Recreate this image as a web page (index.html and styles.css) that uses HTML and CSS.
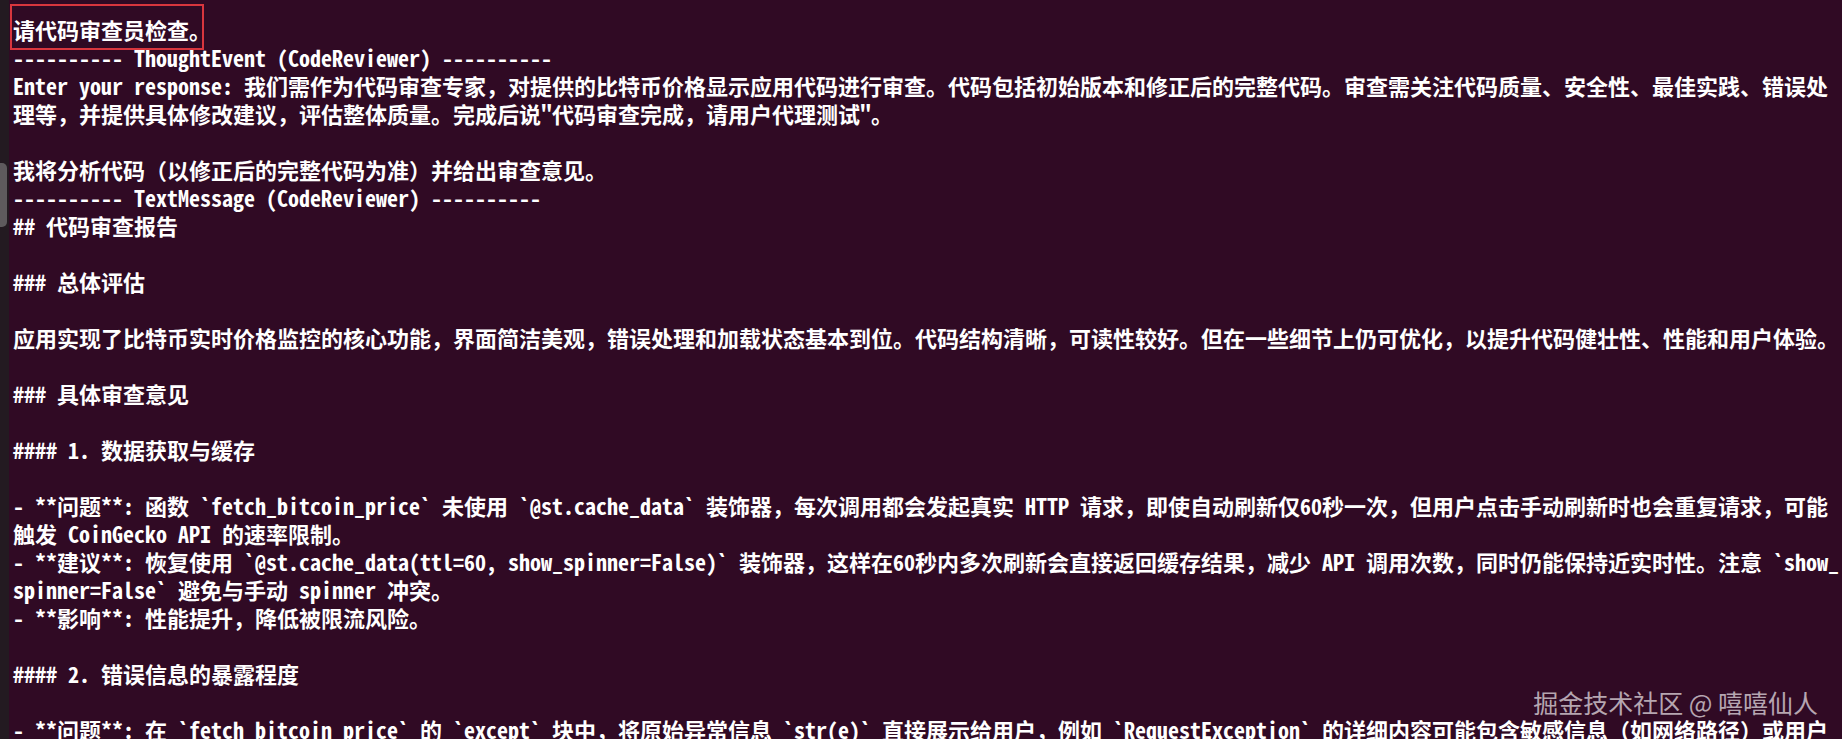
FILE: index.html
```html
<!DOCTYPE html>
<html lang="zh-CN">
<head>
<meta charset="utf-8">
<title>Terminal</title>
<link rel="stylesheet" href="styles.css">
</head>
<body>
<div class="screen">
  <div class="edge"><div class="edge-thumb"></div></div>
  <div class="term">
    <div class="ln"><span class="mark">请代码审查员检查。</span></div>
    <div class="ln">---------- ThoughtEvent (CodeReviewer) ----------</div>
    <div class="ln">Enter your response: 我们需作为代码审查专家，对提供的比特币价格显示应用代码进行审查。代码包括初始版本和修正后的完整代码。审查需关注代码质量、安全性、最佳实践、错误处</div>
    <div class="ln">理等，并提供具体修改建议，评估整体质量。完成后说"代码审查完成，请用户代理测试"。</div>
    <div class="ln"></div>
    <div class="ln">我将分析代码（以修正后的完整代码为准）并给出审查意见。</div>
    <div class="ln">---------- TextMessage (CodeReviewer) ----------</div>
    <div class="ln">## 代码审查报告</div>
    <div class="ln"></div>
    <div class="ln">### 总体评估</div>
    <div class="ln"></div>
    <div class="ln">应用实现了比特币实时价格监控的核心功能，界面简洁美观，错误处理和加载状态基本到位。代码结构清晰，可读性较好。但在一些细节上仍可优化，以提升代码健壮性、性能和用户体验。</div>
    <div class="ln"></div>
    <div class="ln">### 具体审查意见</div>
    <div class="ln"></div>
    <div class="ln">#### 1. 数据获取与缓存</div>
    <div class="ln"></div>
    <div class="ln">- **问题**: 函数 `fetch_bitcoin_price` 未使用 `@st.cache_data` 装饰器，每次调用都会发起真实 HTTP 请求，即使自动刷新仅60秒一次，但用户点击手动刷新时也会重复请求，可能</div>
    <div class="ln">触发 CoinGecko API 的速率限制。</div>
    <div class="ln">- **建议**: 恢复使用 `@st.cache_data(ttl=60, show_spinner=False)` 装饰器，这样在60秒内多次刷新会直接返回缓存结果，减少 API 调用次数，同时仍能保持近实时性。注意 `show_</div>
    <div class="ln">spinner=False` 避免与手动 spinner 冲突。</div>
    <div class="ln">- **影响**: 性能提升，降低被限流风险。</div>
    <div class="ln"></div>
    <div class="ln">#### 2. 错误信息的暴露程度</div>
    <div class="ln"></div>
    <div class="ln">- **问题**: 在 `fetch_bitcoin_price` 的 `except` 块中，将原始异常信息 `str(e)` 直接展示给用户，例如 `RequestException` 的详细内容可能包含敏感信息（如网络路径）或用户</div>
  </div>
  <div class="watermark">掘金技术社区 @ 嘻嘻仙人</div>
</div>
</body>
</html>
```
FILE: styles.css
```css
html, body {
  margin: 0;
  padding: 0;
  background: #300a24;
}
.screen {
  position: relative;
  display: flex;
  width: 1842px;
  height: 739px;
  overflow: hidden;
  background: #300a24;
}
.edge {
  flex: 0 0 9px;
  display: flex;
  flex-direction: column;
  background: #231a21;
}
.edge-thumb {
  margin-top: 163px;
  width: 7px;
  height: 64px;
  border-radius: 0 5px 5px 0;
  background: #5e5a5d;
}
.term {
  flex: 1;
  padding: 15px 0 0 4px;
  font-family: "Noto Sans Mono CJK SC", "Noto Sans CJK SC", monospace;
  font-size: 22px;
  font-weight: 700;
  color: #ffffff;
}
.ln {
  height: 28px;
  line-height: 28px;
  white-space: pre;
}
.mark {
  position: relative;
}
.mark::after {
  content: "";
  position: absolute;
  left: -3px;
  right: 7px;
  top: -9px;
  bottom: -5px;
  border: 2px solid #d9363e;
}
.watermark {
  position: absolute;
  right: 24px;
  top: 687px;
  font-family: "Noto Sans CJK SC", sans-serif;
  font-size: 25px;
  line-height: 30px;
  font-weight: 400;
  color: rgba(235, 228, 233, 0.72);
}
```
